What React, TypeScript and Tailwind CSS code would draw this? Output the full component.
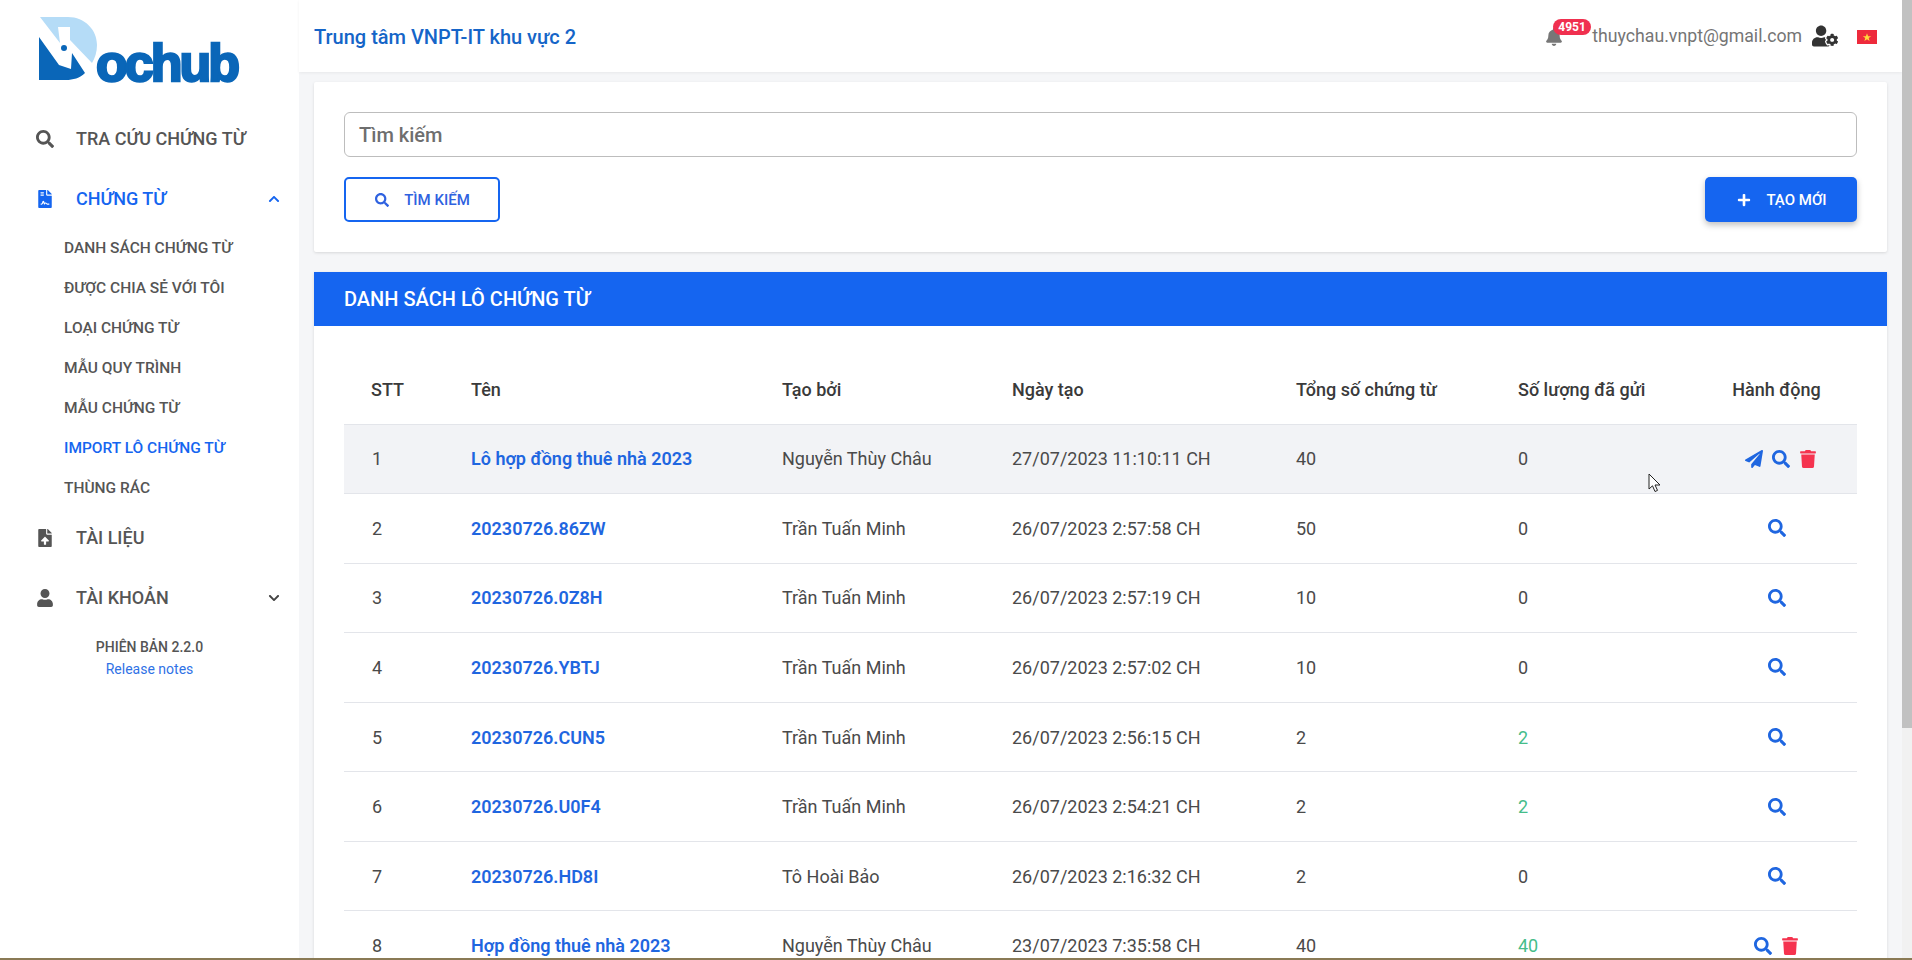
import { FaBell, FaChevronDown, FaChevronUp, FaFileContract, FaFileUpload, FaPaperPlane, FaPlus, FaSearch, FaTrash, FaUser, FaUserCog } from 'react-icons/fa'
import type { ReactNode } from 'react'

const subMenu = [
  'DANH SÁCH CHỨNG TỪ',
  'ĐƯỢC CHIA SẺ VỚI TÔI',
  'LOẠI CHỨNG TỪ',
  'MẪU QUY TRÌNH',
  'MẪU CHỨNG TỪ',
  'IMPORT LÔ CHỨNG TỪ',
  'THÙNG RÁC',
]

const rows = [
  { no: 1, name: 'Lô hợp đồng thuê nhà 2023', by: 'Nguyễn Thùy Châu', at: '27/07/2023 11:10:11 CH', total: 40, sent: 0, send: true, del: true },
  { no: 2, name: '20230726.86ZW', by: 'Trần Tuấn Minh', at: '26/07/2023 2:57:58 CH', total: 50, sent: 0 },
  { no: 3, name: '20230726.0Z8H', by: 'Trần Tuấn Minh', at: '26/07/2023 2:57:19 CH', total: 10, sent: 0 },
  { no: 4, name: '20230726.YBTJ', by: 'Trần Tuấn Minh', at: '26/07/2023 2:57:02 CH', total: 10, sent: 0 },
  { no: 5, name: '20230726.CUN5', by: 'Trần Tuấn Minh', at: '26/07/2023 2:56:15 CH', total: 2, sent: 2 },
  { no: 6, name: '20230726.U0F4', by: 'Trần Tuấn Minh', at: '26/07/2023 2:54:21 CH', total: 2, sent: 2 },
  { no: 7, name: '20230726.HD8I', by: 'Tô Hoài Bảo', at: '26/07/2023 2:16:32 CH', total: 2, sent: 0 },
  { no: 8, name: 'Hợp đồng thuê nhà 2023', by: 'Nguyễn Thùy Châu', at: '23/07/2023 7:35:58 CH', total: 40, sent: 40, del: true },
]

function Logo() {
  return (
    <div className="relative h-[72px] w-[240px] shrink-0">
      <svg className="absolute left-0 top-0" width="110" height="90" viewBox="0 0 110 90">
        <path d="M40 17H68C85 17 97 30 97 45C97 52 95 58 92 63L70 40V27H58L60 43Z" fill="#b5dcf7" />
        <path d="M39 37L59 65L71 69L72 53L85 73C80 78 73 80 66 80H39Z" fill="#0a66b8" />
        <circle cx="64" cy="48" r="3" fill="#0a66b8" />
      </svg>
      <span className="absolute left-[96px] top-[37px] font-['Liberation_Sans',sans-serif] text-[52px] font-bold leading-[52px] tracking-[-3px] text-[#0a66b8] [-webkit-text-stroke:2.5px_#0a66b8]">
        ochub
      </span>
    </div>
  )
}

function NavItem({ icon, label, active, chevron }: { icon: ReactNode, label: string, active?: boolean, chevron?: 'up' | 'down' }) {
  return (
    <div className={`flex h-[60px] items-center pl-[36px] pr-[19px] ${active ? 'text-[#1565f0]' : 'text-[#555555]'}`}>
      <span className="flex w-[40px] shrink-0 text-[18px]">{icon}</span>
      <span className="flex-1 pb-[2px] text-[18px] font-medium">{label}</span>
      {chevron === 'up' && <FaChevronUp className="text-[12px]" />}
      {chevron === 'down' && <FaChevronDown className="text-[12px] text-[#444444]" />}
    </div>
  )
}

function Sidebar() {
  return (
    <aside className="flex w-[299px] shrink-0 flex-col bg-white">
      <Logo />
      <div className="mt-[37px]">
        <NavItem icon={<FaSearch />} label="TRA CỨU CHỨNG TỪ" />
        <NavItem icon={<FaFileContract />} label="CHỨNG TỪ" active chevron="up" />
        <ul className="-mb-[1px] pl-[64px]">
          {subMenu.map(item => (
            <li
              key={item}
              className={`flex h-[40px] items-center text-[15.5px] font-medium ${item.startsWith('IMPORT') ? 'text-[#1565f0]' : 'text-[#555555]'}`}
            >
              {item}
            </li>
          ))}
        </ul>
        <NavItem icon={<FaFileUpload />} label="TÀI LIỆU" />
        <NavItem icon={<FaUser />} label="TÀI KHOẢN" chevron="down" />
      </div>
      <div className="mt-[8px] text-center">
        <p className="text-[14px] font-medium leading-[22px] text-[#555555]">PHIÊN BẢN 2.2.0</p>
        <p className="text-[14px] leading-[22px] text-[#2f72e6]">Release notes</p>
      </div>
    </aside>
  )
}

function Header() {
  return (
    <header className="flex h-[72px] shrink-0 items-center bg-white pl-[15px] pr-[25px] shadow-[0_1px_3px_rgba(0,0,0,0.06)]">
      <h1 className="flex-1 pt-[1px] text-[20px] font-medium text-[#1565c8]">Trung tâm VNPT-IT khu vực 2</h1>
      <div className="relative mr-[29px] mt-[2px] flex text-[18px] text-[#777777]">
        <FaBell />
        <span className="absolute -top-[9px] left-[8px] rounded-full bg-[#f0304f] px-[5px] text-[12px] font-bold leading-[16px] text-white">4951</span>
      </div>
      <span className="pt-[1px] text-[17.7px] text-[#757575]">thuychau.vnpt@gmail.com</span>
      <FaUserCog className="ml-[10px] text-[26px] text-[#333333]" />
      <svg className="ml-[19px] mt-[2px]" width="20" height="14" viewBox="0 0 20 14">
        <rect width="20" height="14" fill="#ee2a3c" />
        <path d="M10 3.2L11.1 6.2H14.2L11.7 8.1L12.6 11L10 9.2L7.4 11L8.3 8.1L5.8 6.2H8.9Z" fill="#ffd83c" />
      </svg>
    </header>
  )
}

function SearchCard() {
  return (
    <section className="rounded-[2px] bg-white p-[30px] shadow-[0_1px_3px_rgba(0,0,0,0.12)]">
      <div className="flex h-[45px] items-center rounded-[6px] border border-[#bdbdbd] px-[14px] pt-[1px] text-[20px] font-medium text-[#6e6e6e]">
        Tìm kiếm
      </div>
      <div className="mt-[20px] flex justify-between">
        <button className="flex h-[45px] w-[156px] items-center justify-center gap-[15px] rounded-[5px] border-2 border-[#1565f0] pl-[1px] pt-[1px] text-[15px] font-medium text-[#2f62e0]">
          <FaSearch className="text-[14px]" />
          TÌM KIẾM
        </button>
        <button className="flex h-[45px] w-[152px] items-center justify-center gap-[15px] rounded-[5px] bg-[#1565f0] pl-[2px] pt-[1px] text-[15px] font-medium text-white shadow-[0_3px_6px_rgba(0,0,0,0.25)]">
          <FaPlus className="text-[14px]" />
          TẠO MỚI
        </button>
      </div>
    </section>
  )
}

function BatchTable() {
  return (
    <section className="mt-[20px] bg-white shadow-[0_1px_3px_rgba(0,0,0,0.12)]">
      <div className="flex h-[54px] items-center bg-[#1565f0] px-[30px] text-[20px] font-medium text-white">
        DANH SÁCH LÔ CHỨNG TỪ
      </div>
      <div className="px-[30px]">
        <table className="w-full table-fixed border-collapse text-[18px]">
          <colgroup>
            <col className="w-[99px]" />
            <col className="w-[311px]" />
            <col className="w-[230px]" />
            <col className="w-[284px]" />
            <col className="w-[222px]" />
            <col className="w-[206px]" />
            <col />
          </colgroup>
          <thead>
            <tr className="h-[98px] text-left text-[#3a3a3a]">
              <th className="pl-[27px] pt-[30px] font-medium">STT</th>
              <th className="pl-[28px] pt-[30px] font-medium">Tên</th>
              <th className="pl-[28px] pt-[30px] font-medium">Tạo bởi</th>
              <th className="pl-[28px] pt-[30px] font-medium">Ngày tạo</th>
              <th className="pl-[28px] pt-[30px] font-medium">Tổng số chứng từ</th>
              <th className="pl-[28px] pt-[30px] font-medium">Số lượng đã gửi</th>
              <th className="pt-[30px] text-center font-medium">Hành động</th>
            </tr>
          </thead>
          <tbody>
            {rows.map(row => (
              <tr key={row.no} className={`h-[69.57px] border-t border-[#e3e5ea] text-[#4a4a4a] ${row.no === 1 ? 'bg-[#f2f3f6]' : ''}`}>
                <td className="pl-[28px]">{row.no}</td>
                <td className="pl-[28px] font-semibold text-[#1f66e0]">{row.name}</td>
                <td className="pl-[28px]">{row.by}</td>
                <td className="pl-[28px]">{row.at}</td>
                <td className="pl-[28px]">{row.total}</td>
                <td className={`pl-[28px] ${row.sent > 0 ? 'text-[#45bd8a]' : ''}`}>{row.sent}</td>
                <td>
                  <div className={`flex items-center justify-center gap-[9px] text-[18px] ${row.send ? 'pl-[8px]' : ''}`}>
                    {row.send && <FaPaperPlane className="text-[#1f66e0]" />}
                    <FaSearch className="text-[#1f66e0]" />
                    {row.del && <FaTrash className="text-[#f5334f]" />}
                  </div>
                </td>
              </tr>
            ))}
          </tbody>
        </table>
      </div>
    </section>
  )
}

export default function App() {
  return (
    <div className="relative flex h-[960px] w-[1912px] overflow-hidden bg-[#f5f6f8] font-['Roboto',sans-serif]">
      <Sidebar />
      <main className="flex min-w-0 flex-1 flex-col">
        <Header />
        <div className="px-[15px] pt-[10px]">
          <SearchCard />
          <BatchTable />
        </div>
      </main>
      <div className="flex w-[10px] shrink-0 flex-col bg-[#f1f1f1]">
        <div className="h-[728px] bg-[#c1c1c1]" />
      </div>
      {/* recorded mouse pointer */}
      <svg className="absolute left-[1648px] top-[473px]" width="13" height="20" viewBox="0 0 13 20">
        <path d="M1 1V16L4.5 12.8L7 18.5L9.5 17.4L7 12H12Z" fill="#fff" stroke="#222" strokeWidth="1" />
      </svg>
      <div className="absolute inset-x-0 bottom-0 h-[2px] bg-[#8a7a55]" />
    </div>
  )
}
